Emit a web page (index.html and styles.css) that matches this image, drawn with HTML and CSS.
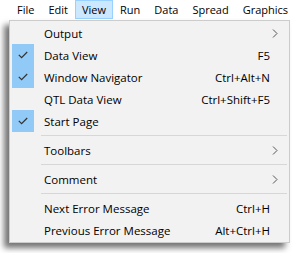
FILE: index.html
```html
<!DOCTYPE html>
<html>
<head>
<meta charset="utf-8">
<link rel="stylesheet" href="styles.css">
</head>
<body>
<div class="menubar">
  <span class="top">File</span>
  <span class="top">Edit</span>
  <span class="top active">View</span>
  <span class="top">Run</span>
  <span class="top">Data</span>
  <span class="top">Spread</span>
  <span class="top">Graphics</span>
</div>
<div class="popup">
  <div class="item"><span class="check"></span><span class="label">Output</span><span class="arrow"><svg width="6" height="9" viewBox="0 0 6 9"><path d="M1 0.5 L5 4.5 L1 8.5" fill="none" stroke="#555" stroke-width="1"/></svg></span></div>
  <div class="item"><span class="check on"><svg width="10" height="8" viewBox="0 0 10 8"><path d="M0.8 3.8 L3.6 6.6 L9.2 1" fill="none" stroke="#333" stroke-width="1.2"/></svg></span><span class="label">Data View</span><span class="key">F5</span></div>
  <div class="item"><span class="check on"><svg width="10" height="8" viewBox="0 0 10 8"><path d="M0.8 3.8 L3.6 6.6 L9.2 1" fill="none" stroke="#333" stroke-width="1.2"/></svg></span><span class="label">Window Navigator</span><span class="key">Ctrl+Alt+N</span></div>
  <div class="item"><span class="check"></span><span class="label">QTL Data View</span><span class="key">Ctrl+Shift+F5</span></div>
  <div class="item"><span class="check on"><svg width="10" height="8" viewBox="0 0 10 8"><path d="M0.8 3.8 L3.6 6.6 L9.2 1" fill="none" stroke="#333" stroke-width="1.2"/></svg></span><span class="label">Start Page</span></div>
  <div class="sep"></div>
  <div class="item"><span class="check"></span><span class="label">Toolbars</span><span class="arrow"><svg width="6" height="9" viewBox="0 0 6 9"><path d="M1 0.5 L5 4.5 L1 8.5" fill="none" stroke="#555" stroke-width="1"/></svg></span></div>
  <div class="sep"></div>
  <div class="item"><span class="check"></span><span class="label">Comment</span><span class="arrow"><svg width="6" height="9" viewBox="0 0 6 9"><path d="M1 0.5 L5 4.5 L1 8.5" fill="none" stroke="#555" stroke-width="1"/></svg></span></div>
  <div class="sep"></div>
  <div class="item"><span class="check"></span><span class="label">Next Error Message</span><span class="key">Ctrl+H</span></div>
  <div class="item"><span class="check"></span><span class="label">Previous Error Message</span><span class="key">Alt+Ctrl+H</span></div>
</div>
</body>
</html>
```

FILE: styles.css
```css
html, body {
  margin: 0;
  padding: 0;
  background: #ffffff;
  width: 292px;
  height: 253px;
  overflow: hidden;
  font-family: "Open Sans", "Noto Sans", sans-serif;
  font-size: 11px;
  color: #000;
}
.menubar {
  display: flex;
  height: 20px;
  padding-left: 10px;
  box-sizing: border-box;
}
.top {
  display: flex;
  align-items: center;
  height: 19px;
  padding: 0 6px;
  box-sizing: border-box;
  border: 1px solid transparent;
}
.top.active {
  background: #cce8ff;
  border-color: #99d1ff;
}
.popup {
  position: absolute;
  left: 9px;
  top: 20px;
  width: 281px;
  box-sizing: border-box;
  background: #f2f2f2;
  border: 1px solid #cccccc;
  padding: 1px 2px 1px 2px;
  box-shadow: -5px 5px 6px rgba(0, 0, 0, 0.55);
  font-size: 11.5px;
}
.item {
  display: flex;
  align-items: center;
  height: 22px;
}
.check {
  width: 22px;
  height: 22px;
  display: flex;
  align-items: center;
  justify-content: center;
}
.check.on {
  background: #91c9f7;
}
.label {
  flex: 1;
  margin-left: 10px;
}
.key {
  margin-right: 17px;
}
.arrow {
  margin-right: 9px;
  display: flex;
}
.sep {
  height: 1px;
  background: #d7d7d7;
  margin: 3px 0 3px 29px;
}
```
